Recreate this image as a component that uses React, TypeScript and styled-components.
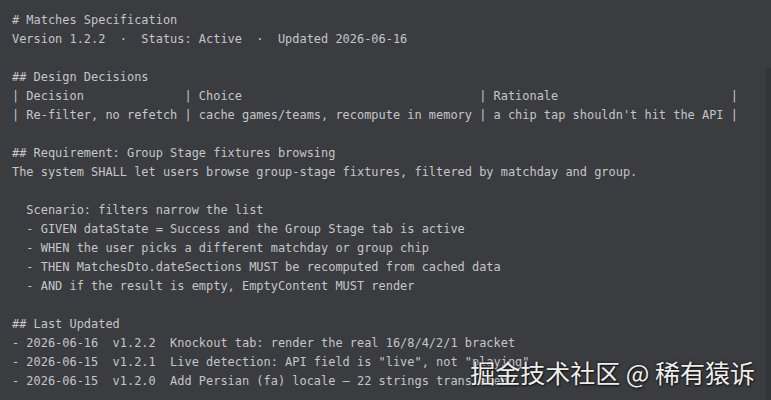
import React from "react";
import styled, { createGlobalStyle } from "styled-components";

const Global = createGlobalStyle`
  html, body { margin: 0; padding: 0; background: #3b3c3f; }
  body { width: 771px; height: 400px; overflow: hidden; }
`;

const Editor = styled.div`
  position: relative;
  display: flex;
  width: 771px;
  height: 400px;
  background: #3b3c3f;
  overflow: hidden;
`;

const Content = styled.div`
  flex: 1;
  display: flex;
  flex-direction: column;
  padding: 11px 0 0 12px;
`;

const Line = styled.div`
  font-family: "DejaVu Sans Mono", "Liberation Mono", monospace;
  font-size: 11.95px;
  line-height: 19px;
  height: 19px;
  color: #c4c6ca;
  white-space: pre;
`;

const ScrollTrack = styled.div`
  width: 5px;
  margin-top: 68px;
  background: #343538;
`;

const Watermark = styled.div`
  position: absolute;
  right: 16px;
  bottom: 13px;
  font-family: "Noto Sans CJK SC", "Noto Sans", sans-serif;
  font-size: 25px;
  line-height: 30px;
  color: #eeeeee;
  text-shadow: 0 0 3px rgba(0, 0, 0, 0.7), 1px 1px 2px rgba(0, 0, 0, 0.6);
  white-space: pre;
`;

const lines: string[] = [
  "# Matches Specification",
  "Version 1.2.2  \u00b7  Status: Active  \u00b7  Updated 2026-06-16",
  "",
  "## Design Decisions",
  "| Decision              | Choice                                 | Rationale                        |",
  "| Re-filter, no refetch | cache games/teams, recompute in memory | a chip tap shouldn't hit the API |",
  "",
  "## Requirement: Group Stage fixtures browsing",
  "The system SHALL let users browse group-stage fixtures, filtered by matchday and group.",
  "",
  "  Scenario: filters narrow the list",
  "  - GIVEN dataState = Success and the Group Stage tab is active",
  "  - WHEN the user picks a different matchday or group chip",
  "  - THEN MatchesDto.dateSections MUST be recomputed from cached data",
  "  - AND if the result is empty, EmptyContent MUST render",
  "",
  "## Last Updated",
  "- 2026-06-16  v1.2.2  Knockout tab: render the real 16/8/4/2/1 bracket",
  "- 2026-06-15  v1.2.1  Live detection: API field is \"live\", not \"playing\"",
  "- 2026-06-15  v1.2.0  Add Persian (fa) locale \u2014 22 strings translated",
];

export default function App() {
  return (
    <>
      <Global />
      <Editor>
        <Content>
          {lines.map((l, i) => (
            <Line key={i}>{l || " "}</Line>
          ))}
        </Content>
        <ScrollTrack />
        <Watermark>掘金技术社区 @ 稀有猿诉</Watermark>
      </Editor>
    </>
  );
}
